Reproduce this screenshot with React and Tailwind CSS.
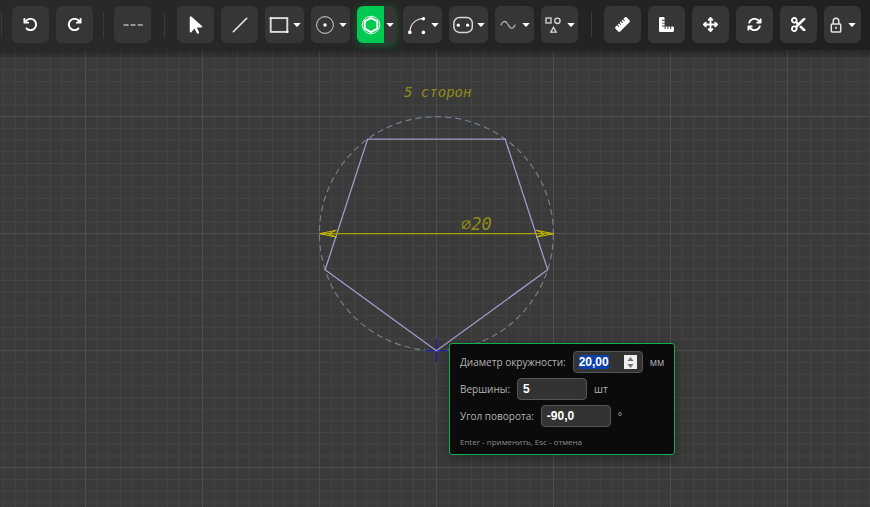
import { useEffect, useRef } from "react";
import {
  FaArrowRotateLeft,
  FaArrowRotateRight,
  FaArrowPointer,
  FaRuler,
  FaRulerCombined,
  FaArrowsUpDownLeftRight,
  FaArrowsRotate,
  FaScissors,
} from "react-icons/fa6";

const buttonBase =
  "flex h-[37px] shrink-0 items-center justify-center rounded-md bg-[#363636] text-white";

function ToolButton({ label, children }) {
  return (
    <button type="button" aria-label={label} className={`${buttonBase} w-[37px]`}>
      {children}
    </button>
  );
}

function Caret() {
  return (
    <svg className="h-1 w-2 shrink-0" viewBox="0 0 8 4" fill="currentColor" aria-hidden="true">
      <path d="M0.3 0h7.4L4.6 3.5q-.6.6-1.2 0z" />
    </svg>
  );
}

function MenuButton({ label, width = "w-[39px]", gap = "gap-1", children }) {
  return (
    <button type="button" aria-label={label} aria-haspopup="menu" className={`${buttonBase} ${width} ${gap}`}>
      {children}
      <Caret />
    </button>
  );
}

function Separator() {
  return <div className="h-[26px] w-px shrink-0 bg-[#3a3a3a]" />;
}

function Toolbar() {
  return (
    <header
      role="toolbar"
      className="relative z-10 flex h-[50px] items-start overflow-hidden bg-linear-to-r from-[#292929] to-[#202020] pt-[6px] pr-[9px] pl-px"
    >
      <div className="flex items-center">
        <Separator />
        <div className="ml-[10px] flex gap-[7px]">
          <ToolButton label="Отменить">
            <FaArrowRotateLeft size={15} />
          </ToolButton>
          <ToolButton label="Повторить">
            <FaArrowRotateRight size={15} />
          </ToolButton>
        </div>
        <div className="mx-[10px] flex">
          <Separator />
        </div>
        <ToolButton label="Тип линии">
          <svg width="20" height="4" viewBox="0 0 20 4" stroke="#b5b5b5" strokeWidth="1.6" aria-hidden="true">
            <path d="M0.5 2h5M7.5 2h5M14.8 2h5" />
          </svg>
        </ToolButton>
        <div className="mx-[13px] flex">
          <Separator />
        </div>
      </div>
      <div className="-ml-px flex gap-[7px]">
        <ToolButton label="Выбор">
          <FaArrowPointer size={20} />
        </ToolButton>
        <ToolButton label="Отрезок">
          <svg width="16" height="16" viewBox="0 0 16 16" stroke="#e8e8e8" strokeWidth="1.6" strokeLinecap="round" aria-hidden="true">
            <path d="M1.3 14.7L14.7 1.3" />
          </svg>
        </ToolButton>
        <MenuButton label="Прямоугольник">
          <svg width="20" height="18" viewBox="0 0 20 18" fill="none" stroke="#dcdcdc" strokeWidth="1.9" aria-hidden="true">
            <rect x="1.7" y="2.1" width="16.6" height="13.8" />
            <g fill="#fff" stroke="none">
              <circle cx="1.7" cy="2.3" r="1" />
              <circle cx="18.3" cy="15.7" r="1.2" />
            </g>
          </svg>
        </MenuButton>
        <MenuButton label="Окружность">
          <svg width="20" height="20" viewBox="0 0 20 20" fill="none" stroke="#b8b8b8" strokeWidth="1.1" aria-hidden="true">
            <circle cx="10" cy="10" r="8.4" />
            <circle cx="10" cy="10" r="1.7" fill="#fff" stroke="none" />
          </svg>
        </MenuButton>
        <div className="flex h-[37px] w-[39px] shrink-0 overflow-hidden rounded-md bg-[#363636] text-white shadow-[0_2px_10px_rgba(0,200,83,0.35)]">
          <button type="button" aria-label="Многоугольник" aria-pressed="true" className="flex w-[27px] items-center justify-center bg-[#00c951]">
            <svg width="20" height="20" viewBox="0 0 20 20" fill="none" stroke="#fff" aria-hidden="true">
              <circle cx="10" cy="10" r="8.8" strokeWidth="1" opacity="0.85" />
              <path d="M10 2.8l6.3 3.6v7.2L10 17.2l-6.3-3.6V6.4z" strokeWidth="2" />
            </svg>
          </button>
          <button type="button" aria-label="Варианты многоугольника" className="flex w-3 items-center justify-center">
            <Caret />
          </button>
        </div>
        <MenuButton label="Дуга">
          <svg width="20" height="20" viewBox="0 0 20 20" fill="none" stroke="#e0e0e0" strokeWidth="1.3" aria-hidden="true">
            <path d="M2.8 17.5C3.3 9.5 8 4 16.5 3.7" />
            <g fill="#fff" stroke="none">
              <circle cx="2.8" cy="17.4" r="1.8" />
              <circle cx="16.4" cy="3.8" r="1.8" />
              <circle cx="16.4" cy="17.4" r="1.8" />
            </g>
          </svg>
        </MenuButton>
        <MenuButton label="Паз">
          <svg width="20" height="18" viewBox="0 0 20 18" fill="none" stroke="#d8d8d8" strokeWidth="1.5" aria-hidden="true">
            <rect x="0.9" y="1.6" width="18.4" height="14.8" rx="5.5" />
            <g fill="#fff" stroke="none">
              <circle cx="5.3" cy="9.2" r="1.6" />
              <circle cx="14.6" cy="9.2" r="1.6" />
            </g>
          </svg>
        </MenuButton>
        <MenuButton label="Сплайн" gap="gap-[6px]">
          <svg width="16" height="10" viewBox="0 0 16 10" fill="none" stroke="#c0c0c0" strokeWidth="1.1" strokeLinecap="round" aria-hidden="true">
            <path d="M1 5C3 .4 5.6 .2 8 4.6S13 9.6 15 5" />
          </svg>
        </MenuButton>
        <MenuButton label="Фигуры" width="w-[37px]" gap="gap-[6px]">
          <svg width="16" height="18" viewBox="0 0 16 18" fill="none" stroke="#d8d8d8" strokeWidth="1.3" aria-hidden="true">
            <rect x="1" y="2" width="5" height="5" />
            <circle cx="12.4" cy="4.8" r="2.7" />
            <path d="M8.5 11.2l2.7 5H5.8z" />
          </svg>
        </MenuButton>
      </div>
      <div className="ml-auto flex items-center">
        <div className="mr-[12px] flex">
          <Separator />
        </div>
        <div className="flex gap-[7px]">
          <ToolButton label="Линейка">
            <FaRuler size={15} />
          </ToolButton>
          <ToolButton label="Размеры">
            <FaRulerCombined size={15} />
          </ToolButton>
          <ToolButton label="Переместить">
            <FaArrowsUpDownLeftRight size={15} />
          </ToolButton>
          <ToolButton label="Повернуть">
            <FaArrowsRotate size={15} />
          </ToolButton>
          <ToolButton label="Обрезать">
            <FaScissors size={15} />
          </ToolButton>
          <MenuButton label="Привязки" width="w-[37px]" gap="gap-[6px]">
            <svg width="12" height="16" viewBox="0 0 12 16" fill="none" stroke="#e4e4e4" strokeWidth="1.5" aria-hidden="true">
              <rect x="1.3" y="7" width="9.4" height="8" rx="0.8" />
              <path d="M3.2 7V4.4a2.8 3.1 0 0 1 5.6 0V7M6 9.8v2.2" />
            </svg>
          </MenuButton>
        </div>
      </div>
    </header>
  );
}

// World origin and scale of the sheet, in canvas pixels.
const CX = 436.4;
const CY = 183.7;
const R = 117;
const STEP = 11.7;

const gridIndexes = Array.from({ length: 401 }, (_, i) => i - 200);

const vertices = Array.from({ length: 5 }, (_, i) => {
  const a = Math.PI / 2 + (i * 2 * Math.PI) / 5;
  return `${(CX + R * Math.cos(a)).toFixed(2)},${(CY + R * Math.sin(a)).toFixed(2)}`;
}).join(" ");

function Drawing() {
  return (
    <svg className="absolute inset-0 h-full w-full" aria-hidden="true">
      {gridIndexes.map((i) => (
        <g key={i} stroke={i % 10 === 0 ? "#505050" : "#444444"} strokeWidth="1">
          <line x1={CX + i * STEP} x2={CX + i * STEP} y1="0" y2="100%" />
          <line y1={CY + i * STEP} y2={CY + i * STEP} x1="0" x2="100%" />
        </g>
      ))}
      <circle cx={CX} cy={CY} r={R} fill="none" stroke="#708090" strokeWidth="1.2" strokeDasharray="6 4" />
      <g stroke="#2020b0" strokeWidth="1.2">
        <path d={`M${CX - 11.5} ${CY + R}h23M${CX} ${CY + R - 11.5}v23`} />
      </g>
      <polygon points={vertices} fill="none" stroke="#a09cc8" strokeWidth="1.3" />
      <g stroke="#a8a000" fill="none">
        <path d={`M${CX - R} ${CY}h${2 * R}`} strokeWidth="1.2" />
        <g stroke="#c8c000" strokeWidth="1">
          <path d={`M${CX - R + 17} ${CY - 3.4}l-17 3.4l17 3.4M${CX - R + 17} ${CY - 3.4}l-8 3.4l8 3.4`} />
          <path d={`M${CX + R - 17} ${CY - 3.4}l17 3.4l-17 3.4M${CX + R - 17} ${CY - 3.4}l8 3.4l-8 3.4`} />
        </g>
      </g>
      <g fill="#938a18" fontFamily="'DejaVu Sans Mono', monospace" fontStyle="italic">
        <text x="404" y="47" fontSize="14">5 сторон</text>
        <text x="461" y="180" fontSize="17">⌀20</text>
      </g>
    </svg>
  );
}

const inputClass =
  "h-[22px] w-[70px] rounded-sm border border-[#555555] bg-[#333333] px-[5px] font-['Liberation_Sans',sans-serif] text-xs font-bold text-white outline-none selection:bg-[#0b41ad] selection:text-white";

function Field({ id, label, unit, value, spinner, inputRef }) {
  return (
    <div className="flex items-center">
      <label htmlFor={id} className="mr-[7px] whitespace-nowrap">
        {label}
      </label>
      <div className="relative flex">
        <input ref={inputRef} id={id} type="text" inputMode="decimal" defaultValue={value} className={inputClass} />
        {spinner && (
          <div className="absolute inset-y-1 right-[6px] flex w-[13px] flex-col bg-[#efefef] text-[#707070]">
            <button type="button" aria-label="Увеличить" className="flex flex-1 items-center justify-center">
              <svg width="7" height="4" viewBox="0 0 7 4" fill="currentColor"><path d="M0.5 4L3.5 0L6.5 4z" /></svg>
            </button>
            <button type="button" aria-label="Уменьшить" className="flex flex-1 items-center justify-center">
              <svg width="7" height="4" viewBox="0 0 7 4" fill="currentColor"><path d="M0.5 0L3.5 4L6.5 0z" /></svg>
            </button>
          </div>
        )}
      </div>
      <span className="ml-[7px]">{unit}</span>
    </div>
  );
}

function ParameterPanel() {
  const diameterRef = useRef(null);

  useEffect(() => {
    diameterRef.current?.focus();
    diameterRef.current?.select();
  }, []);

  return (
    <form className="absolute top-[293px] left-[449px] flex flex-col gap-[5px] rounded-[3px] border border-[#0fae50] bg-[#0b0b0b] px-[10px] pt-[7px] pb-1 font-['Open_Sans','Noto_Sans',sans-serif] text-[10px] leading-4 text-[#b4b4b4] shadow-[0_4px_12px_rgba(0,0,0,0.35)]">
      <Field id="diameter" label="Диаметр окружности:" unit="мм" value="20,00" spinner inputRef={diameterRef} />
      <Field id="vertices" label="Вершины:" unit="шт" value="5" />
      <Field id="angle" label="Угол поворота:" unit="°" value="-90,0" />
      <p className="mt-[2px] text-[8px] leading-4 text-[#8c8c8c]">Enter - применить, Esc - отмена</p>
    </form>
  );
}

export default function App() {
  return (
    <div className="flex min-h-screen flex-col overflow-hidden bg-[#3a3a3a]">
      <Toolbar />
      <main className="relative flex-1 overflow-hidden">
        <Drawing />
        <div className="absolute inset-x-0 top-0 h-[10px] bg-linear-to-b from-black/35 to-transparent" />
        <ParameterPanel />
      </main>
    </div>
  );
}
